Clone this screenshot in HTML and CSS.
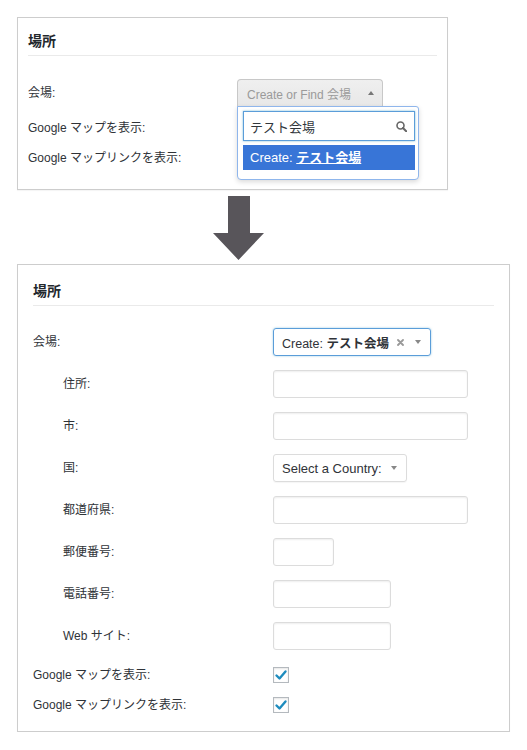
FILE: index.html
```html
<!DOCTYPE html>
<html lang="ja">
<head>
<meta charset="utf-8">
<title>場所</title>
<link rel="stylesheet" href="styles.css">
</head>
<body>
<div class="page">
  <section class="panel panel-top">
    <h2 class="panel-title">場所</h2>
    <div class="form form-top">
      <div class="row row-venue">
        <span class="label">会場:</span>
        <div class="combo">
          <div class="combo-select">
            <span class="placeholder">Create or Find 会場</span>
            <span class="tri-up"></span>
          </div>
          <div class="combo-drop">
            <div class="search">
              <span class="search-text">テスト会場</span>
              <svg class="search-icon" width="11" height="11" viewBox="0 0 11 11"><circle cx="4.5" cy="4.5" r="3.5" fill="none" stroke="#666" stroke-width="1.6"/><line x1="7" y1="7" x2="10.2" y2="10.2" stroke="#666" stroke-width="2" stroke-linecap="round"/></svg>
            </div>
            <div class="option">Create: <b class="opt-name">テスト会場</b></div>
          </div>
        </div>
      </div>
      <div class="row"><span class="label">Google マップを表示:</span></div>
      <div class="row"><span class="label">Google マップリンクを表示:</span></div>
    </div>
  </section>

  <div class="arrow">
    <svg width="51" height="64" viewBox="0 0 51 64"><path d="M15 0 H37 V37 H51 L25.5 64 L0 37 H15 Z" fill="#58555a"/></svg>
  </div>

  <section class="panel panel-bottom">
    <h2 class="panel-title">場所</h2>
    <div class="form form-bottom">
      <div class="fields">
        <div class="row">
          <span class="label">会場:</span>
          <div class="venue-select">
            <span class="venue-text">Create: <b>テスト会場</b></span>
            <svg class="clear" width="7" height="7" viewBox="0 0 7 7"><path d="M1 1 L6 6 M6 1 L1 6" stroke="#999" stroke-width="1.8" stroke-linecap="round"/></svg>
            <span class="tri-down"></span>
          </div>
        </div>
        <div class="row"><span class="label sub">住所:</span><span class="input w-long"></span></div>
        <div class="row"><span class="label sub">市:</span><span class="input w-long"></span></div>
        <div class="row">
          <span class="label sub">国:</span>
          <div class="country-select"><span>Select a Country:</span><span class="tri-down"></span></div>
        </div>
        <div class="row"><span class="label sub">都道府県:</span><span class="input w-long"></span></div>
        <div class="row"><span class="label sub">郵便番号:</span><span class="input w-short"></span></div>
        <div class="row"><span class="label sub">電話番号:</span><span class="input w-mid"></span></div>
        <div class="row"><span class="label sub">Web サイト:</span><span class="input w-mid"></span></div>
      </div>
      <div class="checks">
        <div class="row check-row">
          <span class="label">Google マップを表示:</span>
          <span class="checkbox"><svg width="14" height="14" viewBox="0 0 14 14"><path d="M2.5 7.5 L5.5 10.5 L11.5 3.5" fill="none" stroke="#1e8cbe" stroke-width="2.4" stroke-linecap="round" stroke-linejoin="round"/></svg></span>
        </div>
        <div class="row check-row">
          <span class="label">Google マップリンクを表示:</span>
          <span class="checkbox"><svg width="14" height="14" viewBox="0 0 14 14"><path d="M2.5 7.5 L5.5 10.5 L11.5 3.5" fill="none" stroke="#1e8cbe" stroke-width="2.4" stroke-linecap="round" stroke-linejoin="round"/></svg></span>
        </div>
      </div>
    </div>
  </section>
</div>
</body>
</html>
```

FILE: styles.css
```css
* { box-sizing: border-box; }

body {
  margin: 0;
  background: #fff;
  font-family: "Liberation Sans", "Noto Sans CJK JP", sans-serif;
  font-size: 12px;
  color: #2f3338;
}

.page {
  padding: 17px 0 0 17px;
}

.panel {
  border: 1px solid #cdcdcd;
  background: #fff;
  box-shadow: 0 1px 1px rgba(0, 0, 0, 0.04);
}

.panel-title {
  margin: 0;
  font-size: 14px;
  line-height: 20px;
  font-weight: bold;
  color: #23282d;
  padding-bottom: 4px;
  border-bottom: 1px solid #eaeaea;
}

.row {
  display: flex;
  align-items: center;
}

.label {
  flex: none;
  line-height: 16px;
}

/* ---------- top panel ---------- */
.panel-top {
  width: 431px;
  padding: 13px 10px 16px;
}

.form-top {
  margin-top: 23px;
}

.form-top .label {
  width: 209px;
}

.form-top .row {
  height: 30px;
}

.form-top .row-venue {
  height: 28px;
  margin-bottom: 6px;
}

.combo {
  position: relative;
  width: 146px;
  align-self: flex-start;
}

.combo-select {
  height: 28px;
  display: flex;
  align-items: center;
  justify-content: space-between;
  padding: 0 7px 0 9px;
  background: linear-gradient(#efefef, #e8e8e8);
  border: 1px solid #c8c8c8;
  border-bottom-color: #d8d8d8;
  border-radius: 4px 4px 0 0;
}

.placeholder {
  color: #9a9a9a;
  font-size: 12px;
}

.tri-up {
  width: 0;
  height: 0;
  border-left: 3px solid transparent;
  border-right: 3px solid transparent;
  border-bottom: 4px solid #777;
  margin-right: 1px;
}

.combo-drop {
  position: absolute;
  top: 27px;
  left: 0;
  width: 182px;
  padding: 4px 3px 9px 5px;
  background: #fff;
  border: 1px solid #8fb6ec;
  border-radius: 0 3px 4px 4px;
  box-shadow: 0 2px 5px rgba(0, 0, 0, 0.15);
}

.search {
  height: 30px;
  display: flex;
  align-items: center;
  justify-content: space-between;
  padding: 0 7px 0 6px;
  border: 1px solid #5b9dd9;
  box-shadow: 0 0 2px rgba(30, 140, 190, 0.6);
  margin-bottom: 4px;
}

.search-text {
  font-size: 13px;
  color: #32373c;
}

.option {
  height: 25px;
  line-height: 25px;
  padding-left: 7px;
  background: #3875d7;
  color: #fff;
  font-size: 13px;
}

.opt-name {
  text-decoration: underline;
}

/* ---------- arrow ---------- */
.arrow {
  margin: 6px 0 4px 196px;
  height: 64px;
}

.arrow svg {
  display: block;
}

/* ---------- bottom panel ---------- */
.panel-bottom {
  width: 493px;
  padding: 16px 15px 11px;
}

.form-bottom {
  margin-top: 22px;
}

.fields {
  display: flex;
  flex-direction: column;
  gap: 14px;
}

.form-bottom .label {
  width: 240px;
}

.form-bottom .row {
  height: 28px;
}

.form-bottom .label.sub {
  padding-left: 30px;
}

.venue-select {
  width: 158px;
  height: 28px;
  display: flex;
  align-items: center;
  padding: 0 9px 0 8px;
  border: 1px solid #5b9dd9;
  border-radius: 3px;
  box-shadow: 0 0 2px rgba(30, 140, 190, 0.5);
  font-size: 12.5px;
}

.venue-text {
  flex: none;
}

.clear {
  margin-left: 8px;
  flex: none;
}

.venue-select .tri-down {
  margin-left: auto;
}

.tri-down {
  width: 0;
  height: 0;
  border-left: 3px solid transparent;
  border-right: 3px solid transparent;
  border-top: 4px solid #888;
  flex: none;
}

.input {
  display: block;
  height: 28px;
  border: 1px solid #dcdcdc;
  border-radius: 3px;
  background: #fff;
  box-shadow: inset 0 1px 2px rgba(0, 0, 0, 0.07);
}

.w-long { width: 195px; }
.w-mid { width: 118px; }
.w-short { width: 61px; }

.country-select {
  width: 134px;
  height: 28px;
  display: flex;
  align-items: center;
  justify-content: space-between;
  padding: 0 9px 0 8px;
  border: 1px solid #dcdcdc;
  border-radius: 3px;
  box-shadow: 0 1px 1px rgba(0, 0, 0, 0.04);
  font-size: 13px;
}

.checks {
  margin-top: 10px;
}

.form-bottom .check-row {
  height: 30px;
}

.checkbox {
  width: 16px;
  height: 16px;
  border: 1px solid #b4b9be;
  background: #fff;
  box-shadow: inset 0 1px 2px rgba(0, 0, 0, 0.1);
  display: flex;
  align-items: center;
  justify-content: center;
}

.checkbox svg {
  display: block;
}
```
